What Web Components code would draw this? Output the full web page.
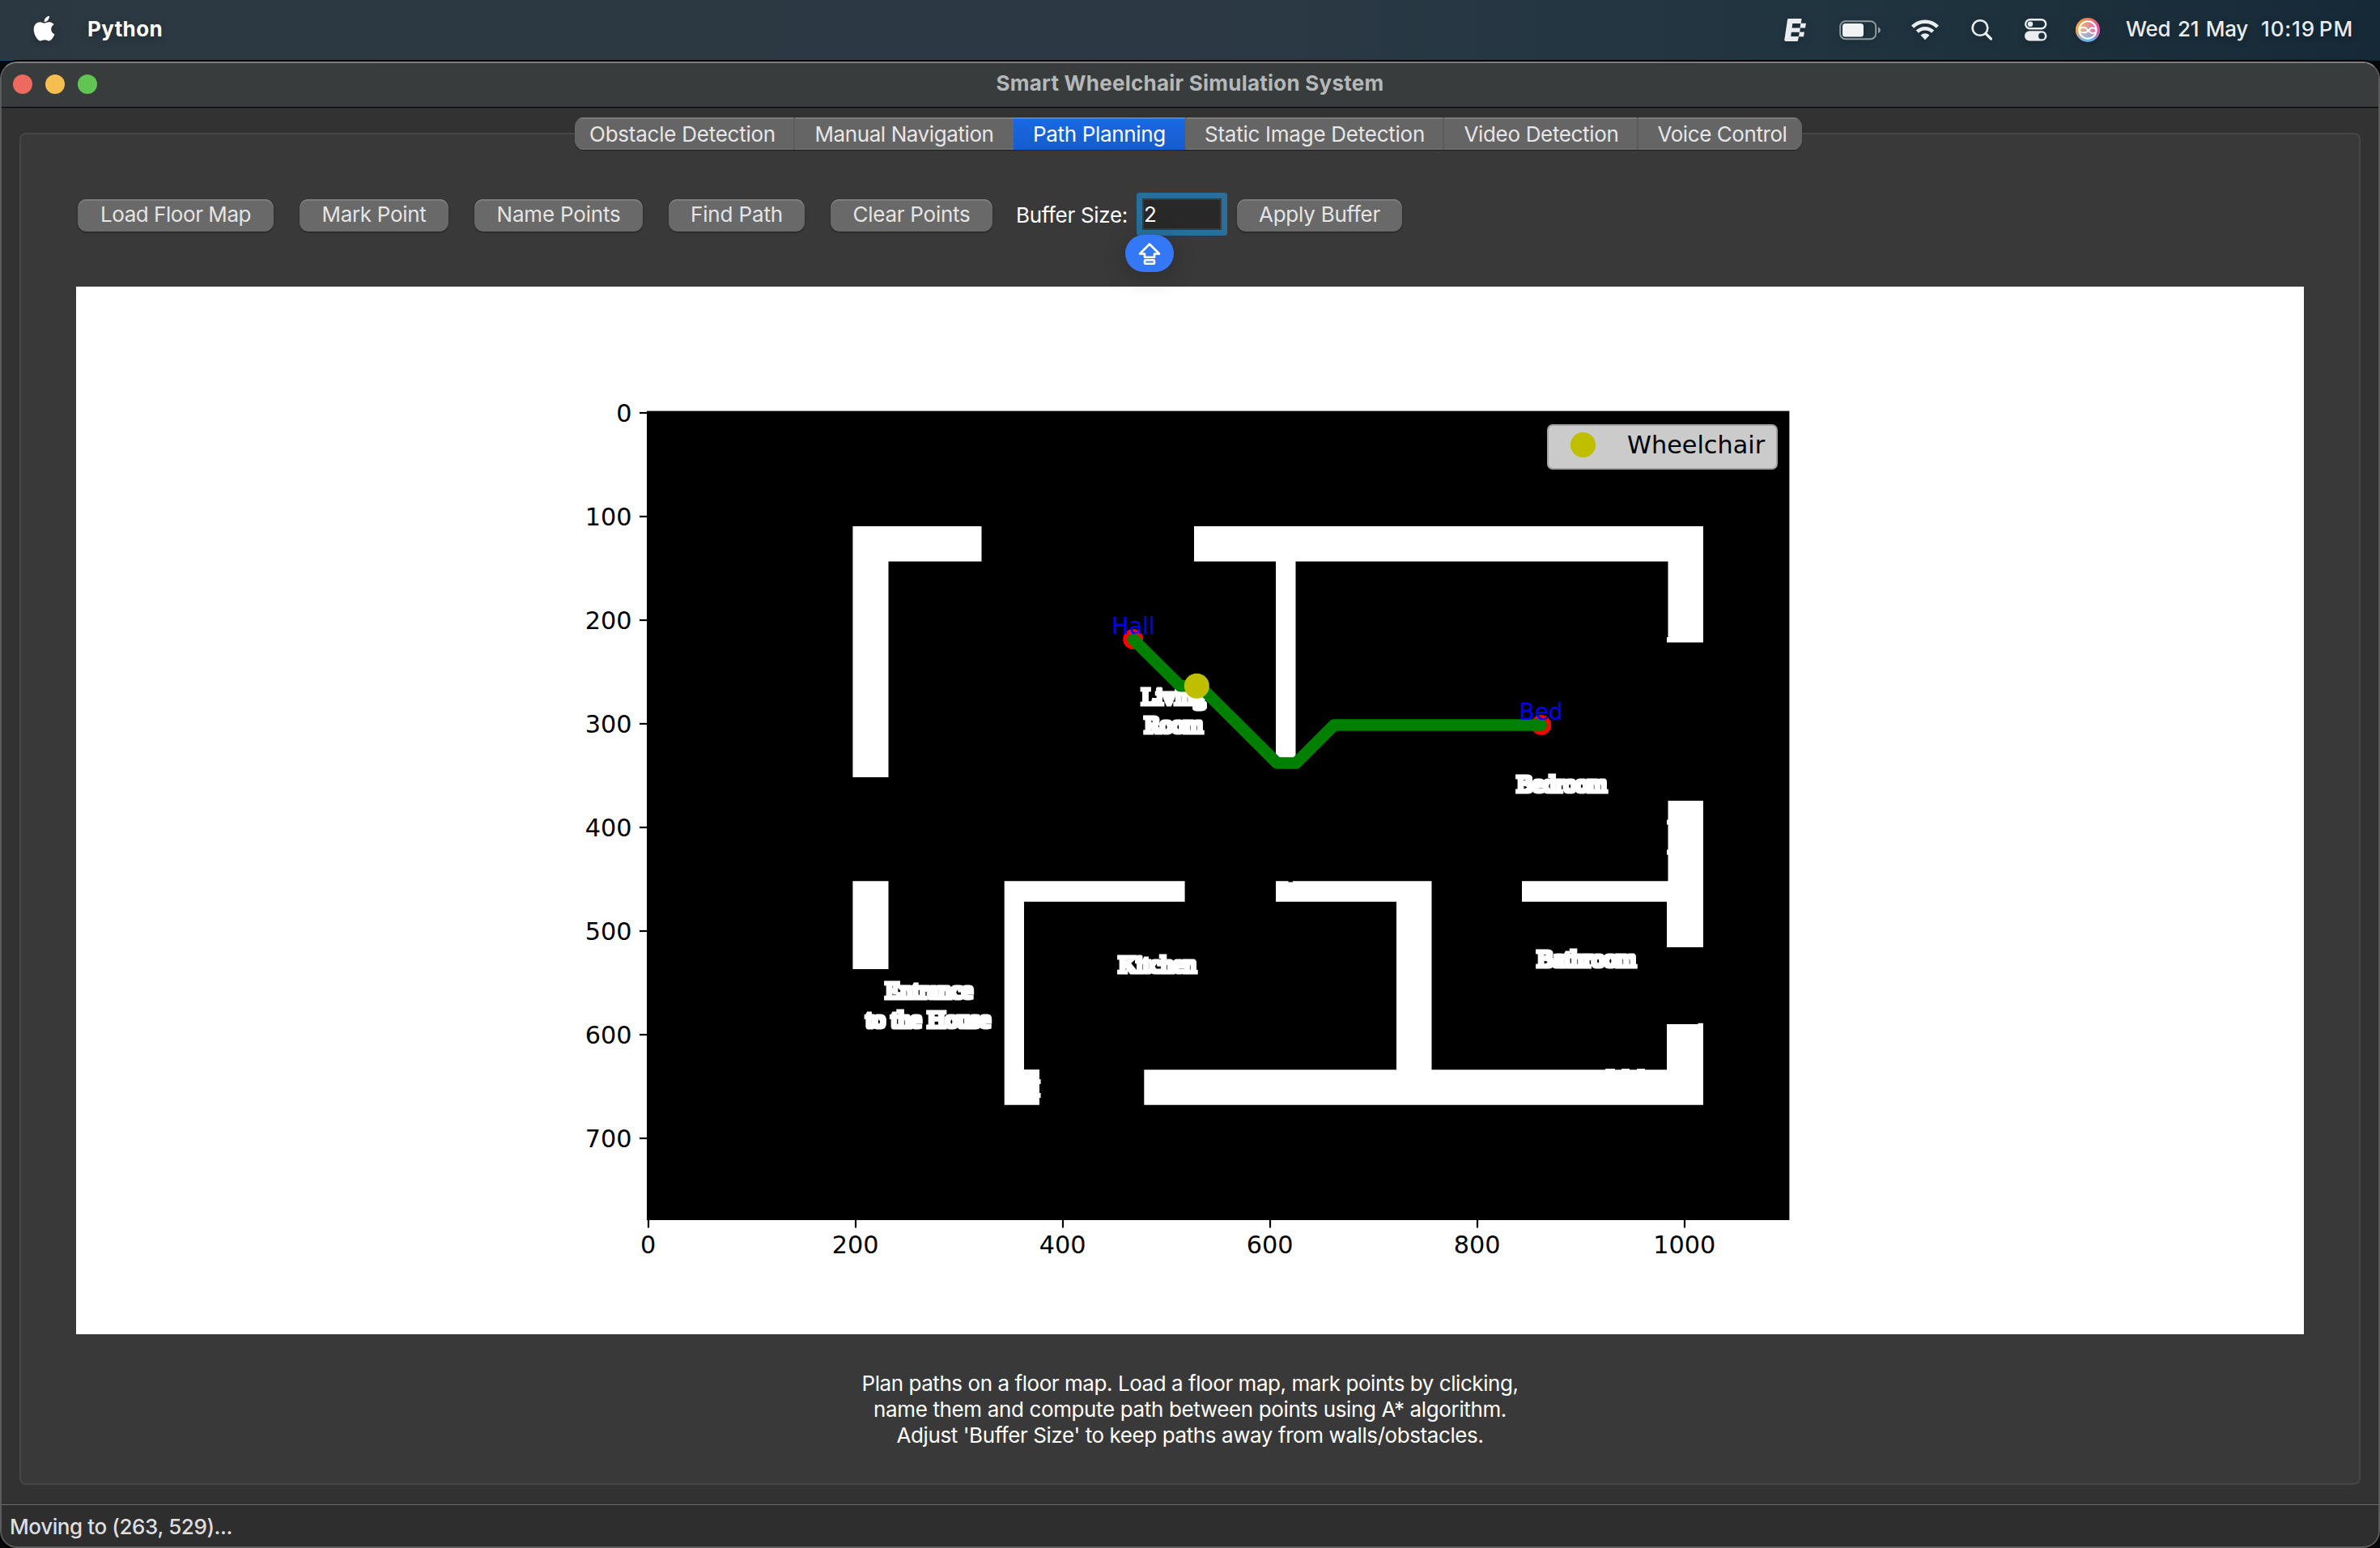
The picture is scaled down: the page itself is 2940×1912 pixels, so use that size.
<!DOCTYPE html>
<html lang="en">
<head>
<meta charset="utf-8">
<title>Smart Wheelchair Simulation System</title>
<style>
html,body{margin:0;padding:0;width:2940px;height:1912px;overflow:hidden;background:#05090c}
body{font-family:Inter,"Liberation Sans",sans-serif;font-size:26px;color:#e4e4e4;display:flex;flex-direction:column}
</style>
</head>
<body>
<menu-bar>
  <menu-glyph slot="left" name="apple"></menu-glyph>
  <fit-text slot="left" w="93" style="font-weight:700;color:#fff;line-height:72px">Python</fit-text>
  <menu-glyph slot="right" name="editor" style="margin-right:40px"></menu-glyph>
  <menu-glyph slot="right" name="battery" style="margin-right:37px"></menu-glyph>
  <menu-glyph slot="right" name="wifi" style="margin-right:40px"></menu-glyph>
  <menu-glyph slot="right" name="search" style="margin-right:40px"></menu-glyph>
  <menu-glyph slot="right" name="control" style="margin-right:35px"></menu-glyph>
  <menu-glyph slot="right" name="siri" style="margin-right:31px"></menu-glyph>
  <fit-text slot="right" w="151" style="margin-right:16px;word-spacing:2px">Wed 21 May</fit-text>
  <fit-text slot="right" w="114" style="word-spacing:-3px">10:19 PM</fit-text>
</menu-bar>
<desktop-strip></desktop-strip>
<app-window>
  <fit-text slot="title" w="479">Smart Wheelchair Simulation System</fit-text>
  <tab-strip slot="tabs">
    <tab-item style="width:270px;padding-right:6px" first><fit-text w="230">Obstacle Detection</fit-text></tab-item>
    <tab-item style="width:272px"><fit-text w="221">Manual Navigation</fit-text></tab-item>
    <tab-item style="width:212px" active><fit-text w="164">Path Planning</fit-text></tab-item>
    <tab-item style="width:318px" nodiv><fit-text w="272">Static Image Detection</fit-text></tab-item>
    <tab-item style="width:240px;padding-left:2px"><fit-text w="191">Video Detection</fit-text></tab-item>
    <tab-item style="width:204px;padding-left:5px"><fit-text w="160">Voice Control</fit-text></tab-item>
  </tab-strip>
  <tool-row>
    <push-button style="width:242px"><fit-text w="186">Load Floor Map</fit-text></push-button>
    <push-button style="width:184px"><fit-text w="129">Mark Point</fit-text></push-button>
    <push-button style="width:208px"><fit-text w="153">Name Points</fit-text></push-button>
    <push-button style="width:168px"><fit-text w="114">Find Path</fit-text></push-button>
    <push-button style="width:200px"><fit-text w="145">Clear Points</fit-text></push-button>
    <number-field label="Buffer Size:" value="2"></number-field>
    <push-button style="width:204px"><fit-text w="150">Apply Buffer</fit-text></push-button>
  </tool-row>
  <floor-plot></floor-plot>
  <help-text>
    <fit-text w="811">Plan paths on a floor map. Load a floor map, mark points by clicking,</fit-text>
    <fit-text w="782">name them and compute path between points using A* algorithm.</fit-text>
    <fit-text w="725">Adjust 'Buffer Size' to keep paths away from walls/obstacles.</fit-text>
  </help-text>
  <fit-text slot="status" w="275">Moving to (263, 529)...</fit-text>
</app-window>
<script>
const define = (name, html, init) => customElements.define(name, class extends HTMLElement {
  constructor() {
    super();
    this.attachShadow({ mode: 'open' }).innerHTML = typeof html === 'function' ? html(this) : html;
  }
  connectedCallback() { if (init) init.call(this); }
});

define('menu-bar', `<style>
:host{display:flex;justify-content:space-between;box-sizing:border-box;height:74px;padding:0 33px 0 41px;line-height:71px;
 background:linear-gradient(90deg,#2c3841 0,#2c3944 50%,#213541 74%,#1c303c 88%,#152936 100%);font-weight:500;color:#e9edef;
 text-shadow:0 3px 8px rgba(0,0,0,.25);flex:none}
div{display:flex;align-items:flex-start}
.l{gap:40px}
</style><div class="l"><slot name="left"></slot></div><div><slot name="right"></slot></div>`);

const glyphs = {
apple: [27, `<path fill="#fff" transform="translate(.4 17.6) scale(.0685)" d="M318.7 268.7c-.2-36.7 16.4-64.4 50-84.8-18.8-26.9-47.2-41.7-84.7-44.6-35.5-2.8-74.3 20.7-88.500 20.7-15 0-49.400-19.700-76.400-19.700C63.300 141.200 4 184.800 4 273.500q0 39.300 14.400 81.200c12.800 36.700 59 126.700 107.200 125.200 25.200-.6 43-17.900 75.800-17.900 31.800 0 48.300 17.900 76.400 17.900 48.600-.7 90.400-82.500 102.600-119.300-65.200-30.700-61.700-90-61.700-91.900zm-56.600-164.200c27.300-32.400 24.800-61.900 24-72.500-24.100 1.400-52 16.400-67.900 34.900-17.500 19.800-27.800 44.300-25.600 71.900 26.100 2 49.900-11.400 69.500-34.300z"/>`],
editor: [28, `<path fill="#e9edef" d="M5 23H21.500L20.800 28.700H27L26 34.500H19.800L19.300 39.500H25L24 45.300H18L17 50Q16.800 51 16 51H2Q0 51 .3 49L4 24.500Q4.200 23 5 23zM10.300 29L9.600 34.500H19.500L20.300 29zM8.900 39.800L8.200 45H18L18.800 39.800z" fill-rule="evenodd"/>`],
battery: [52, `<rect x="1.200" y="26.200" width="44" height="22" rx="6.500" fill="none" stroke="#8e9aa0" stroke-width="2"/><rect x="4" y="29" width="26" height="16.400" rx="3.500" fill="#f0f2f3"/><path d="M48 33.500q3 1 3 3.700t-3 3.700z" fill="#8e9aa0"/>`],
wifi: [34, `<g fill="none" stroke="#e9edef" stroke-width="4.600"><path d="M1.600 33.200a21.700 21.700 0 0 1 30.800 0"/><path d="M7.400 39.200a13.500 13.500 0 0 1 19.200 0"/></g><path fill="#e9edef" d="M11.500 43.500a8 8 0 0 1 11 0L17 49.300z"/>`],
search: [26, `<circle cx="11" cy="34.500" r="9.300" fill="none" stroke="#e9edef" stroke-width="2.600"/><path d="M18 41.500L24.500 48" stroke="#e9edef" stroke-width="3.200" stroke-linecap="round"/>`],
control: [28, `<rect x="1.200" y="24.200" width="25" height="11" rx="5.500" fill="none" stroke="#e9edef" stroke-width="2.400"/><circle cx="7" cy="29.700" r="3.200" fill="#e9edef"/><rect x="0" y="38.300" width="27.400" height="12.200" rx="6.100" fill="#e9edef"/><circle cx="21" cy="44.400" r="3.900" fill="#1c303c"/>`],
siri: [31, `<defs><linearGradient id="a" x1=".3" y1="0" x2=".6" y2="1"><stop offset="0" stop-color="#ee7a3c"/><stop offset=".5" stop-color="#c9a0a8"/><stop offset="1" stop-color="#4fb4f5"/></linearGradient><radialGradient id="b" cx="1" cy=".4" r=".6"><stop offset="0" stop-color="#f5389a"/><stop offset="1" stop-color="#f5389a" stop-opacity="0"/></radialGradient><radialGradient id="c" cx="0" cy=".35" r=".55"><stop offset="0" stop-color="#f5b03c"/><stop offset="1" stop-color="#f5b03c" stop-opacity="0"/></radialGradient></defs><circle cx="15" cy="37" r="15" fill="url(#a)"/><circle cx="15" cy="37" r="15" fill="url(#b)"/><circle cx="15" cy="37" r="15" fill="url(#c)"/><circle cx="15" cy="37" r="10.700" fill="#fff" fill-opacity=".1" stroke="#fff" stroke-width="2"/><path d="M4.500 36.500C8 32.500 12 33 15 37s7 5.500 9.500 2.500M4.500 37.500c1 3 8 4.500 11.500 0 3-4 6.500-4.500 9.500-.5" fill="none" stroke="#fff" stroke-width="1.900"/>`]
};
define('menu-glyph', el => {
  const [w, body] = glyphs[el.getAttribute('name')];
  return `<style>:host{display:block;width:${w}px;height:74px;filter:drop-shadow(0 3px 4px rgba(0,0,0,.25))}svg{display:block}</style><svg width="${w}" height="74" viewBox="0 0 ${w} 74">${body}</svg>`;
});

/* Sliver of desktop visible between the menu bar and the window. */
define('desktop-strip', `<style>
:host{display:block;flex:none;height:1px;border-bottom:1px solid #000;background:linear-gradient(90deg,#1d4a62 0 59px,#050708 59px 62px,#4f6a7a 62px 108px,#000 108px 148px,#123040 148px 200px,#000 200px 396px,#7f8c93 396px 682px,#6a5a40 682px 690px,#16333f 690px 716px,#000 716px 919px,#7f9093 919px 1134px,#000 1134px 1160px,#163a50 1160px 1220px,#000 1220px 1683px,#8a9a9c 1683px 1826px,#000 1826px 1935px,#76888c 1935px 2087px,#000 2087px 2173px,#7f9aa4 2173px 2322px,#000 2322px 2513px,#7aa0b0 2513px 2535px,#041018 2535px 2740px,#05283c 2740px)}
</style>`);

define('app-window', `<style>
:host{display:flex;flex-direction:column;box-sizing:border-box;height:1836px;border:2px solid #5b5b5b;border-top-color:#7b7e7e;border-radius:21px;background:#323232;overflow:hidden;box-shadow:0 0 0 2px #000}
header{display:grid;grid-template-columns:1fr auto 1fr;height:54px;background:#383c3c;border-bottom:1px solid #000;box-shadow:0 1px 0 #2b2b2b;color:#b4b8b8;font-weight:700;line-height:49px;flex:none}
.lights{display:flex;gap:16px;padding:14px 0 0 14px}
.lights i{width:24px;height:24px;border-radius:50%;background:#ed6a5f}
.lights i:nth-child(2){background:#f5bf4f}.lights i:nth-child(3){background:#61c554}
main{display:flex;flex-direction:column;flex:1;padding:12px 22px 24px}
.tabs{display:flex;justify-content:center;height:40px;z-index:1;margin-right:4px}
.pane{flex:1;display:flex;flex-direction:column;margin-top:-21px;background:#393939;border:2px solid #464646;border-radius:8px;box-sizing:border-box}
footer{height:51px;border-top:1px solid #6b6b6b;background:#2e2e2e;line-height:54px;padding-left:10px;color:#dedede;flex:none;font-weight:450}
</style>
<header><div class="lights"><i></i><i></i><i></i></div><slot name="title"></slot></header>
<main><div class="tabs"><slot name="tabs"></slot></div><div class="pane"><slot></slot></div></main>
<footer><slot name="status"></slot></footer>`);

define('tab-strip', `<style>:host{display:flex;width:1516px;height:40px;border-radius:11px;overflow:hidden;background:#656565;box-shadow:0 1px 1px rgba(0,0,0,.45)}</style><slot></slot>`);
define('tab-item', `<style>:host{display:flex;justify-content:center;box-sizing:border-box;height:40px;line-height:41px;color:#e6e6e6;border-left:2px solid #5c5c5c;box-shadow:inset 0 2px 0 #7b7b7b,inset 0 -2px 0 #6c6c6c}
:host([first]),:host([nodiv]){border-left-color:transparent}
:host([active]){border-left:0;color:#fff;background:linear-gradient(#1a69e6,#155ccd);box-shadow:inset 0 2px 0 #3f86ef}</style><slot></slot>`);

define('tool-row', `<style>:host{display:flex;gap:32px;height:40px;margin:80px 0 0 70px;flex:none}</style><slot></slot>`);
define('push-button', `<style>:host{display:flex;justify-content:center;height:40px;line-height:37px;border-radius:11px;background:#696969;box-shadow:inset 0 2px 0 #7e7e7e,0 1px 2px rgba(0,0,0,.5);color:#e4e4e4}</style><slot></slot>`);
define('number-field', el => `<style>
:host{display:flex;width:272px;margin-right:-34px;color:#fff;line-height:40px}
.label{margin-left:-3px;width:156px}
.field{position:relative;box-sizing:border-box;width:98px;height:39px;margin-top:-1px;background:#282828;box-shadow:inset 0 0 0 2px #3b3b3b,0 0 0 7px #286f9c;border-radius:1px;padding-left:2px}
.badge{position:absolute;left:-21px;top:45px;width:60px;height:46px;border-radius:23px;background:#3478f7;box-shadow:0 6px 28px rgba(0,0,0,.22);z-index:2}
svg{display:block}
</style>
<div class="label"><fit-text w="138">${el.getAttribute('label')}</fit-text></div>
<div class="field"><fit-text>${el.getAttribute('value')}</fit-text>
<div class="badge"><svg width="60" height="46" viewBox="0 0 60 46" fill="none" stroke="#fff" stroke-width="2.600" stroke-linejoin="round"><path d="M30 11.500L42 23.500H36V27.700H24V23.500H18z"/><rect x="24" y="31.300" width="12" height="4.500" rx="1"/></svg></div></div>`);

define('floor-plot', () => {
  const yt = [0,100,200,300,400,500,600,700], xt = [0,200,400,600,800,1000];
  const ticks = yt.map(v => `<path d="M790 ${510 + v * 1.28}H799"/>`).join('') + xt.map(v => `<path d="M${801 + v * 1.28} 1507V1516.500"/>`).join('');
  const labels = yt.map(v => `<text x="780.500" y="${521.3 + v * 1.28}" text-anchor="end">${v}</text>`).join('') + xt.map(v => `<text x="${800.7 + v * 1.28}" y="1548" text-anchor="middle">${v}</text>`).join('');
  const room = (x, y, len, t) => `<text x="${x}" y="${y}" textLength="${len}" lengthAdjust="spacingAndGlyphs">${t}</text>`;
  return `<style>
:host{display:block;width:2752px;height:1294px;margin:68px 0 0 68px;background:#fff;flex:none}
svg{display:block}
.ax{font:30.300px "DejaVu Sans",sans-serif;fill:#000}
.room{font:29px "Liberation Serif",serif;fill:#fff;stroke:#fff;stroke-width:.9}
.pt{font:27.800px "DejaVu Sans",sans-serif;fill:#00f;text-anchor:middle}
</style>
<svg width="2752" height="1294" viewBox="94 354 2752 1294">
<defs><filter id="dilate" x="-5%" y="-5%" width="110%" height="110%"><feMorphology operator="dilate" radius="2"/></filter></defs>
<rect x="799" y="507.600" width="1411.400" height="999.400"/>
<g stroke="#000" stroke-width="2.200">${ticks}</g>
<g class="ax">${labels}</g>
<g fill="#fff">
<path d="M1053.400 650H1212.500V693.600H1097.500V960H1053.400z"/>
<path d="M1475 650H2104V793.600H2059V787H2060.500V693.600H1600.500V942H1576V693.600H1475z"/>
<path d="M2060.500 989H2104V1170H2059V1113.700H1880V1088.200H2060.500V1055.700H2059V1049.500H2060.500V1018.500H2059V1012.600H2060.500z"/>
<path d="M1053.400 1088.200H1097.500V1197H1053.400z"/>
<path d="M1240.700 1088.200H1463.600V1113.700H1265V1321H1284V1333H1285.600V1339H1284V1350H1285.600V1356H1284V1364.700H1240.700z"/>
<path d="M1576 1088.200H1591.500V1089.500H1597V1088.200H1768.500V1321.200H1983V1320H1995V1321.200H2003V1320H2013V1321.200H2022V1320H2032V1321.200H2059V1265H2097.500V1263.800H2104V1364.700H1413.300V1321.200H1725V1113.700H1576z"/>
</g>
<g class="room" filter="url(#dilate)">
${room(1410.2, 870, 79, 'Living')}
${room(1413.7, 904.5, 72, 'Room')}
${room(1873.7, 978, 111, 'Bedroom')}
${room(1381.7, 1201, 96, 'Kitchen')}
${room(1093.7, 1233, 108, 'Entrance')}
${room(1069.7, 1268.5, 154, 'to the House')}
${room(1898.7, 1193.5, 122, 'Bathroom')}
</g>
<circle cx="1399.700" cy="789.500" r="12.500" fill="#f00"/><circle cx="1903.700" cy="895.500" r="12.500" fill="#f00"/>
<path d="M1399.700 789.500L1458 847.300H1482L1577.500 942.500H1601L1648 895.500H1903.700" fill="none" stroke="#008000" stroke-width="14.500" stroke-linejoin="round" stroke-linecap="round"/>
<text class="pt" x="1400" y="782.700">Hall</text><text class="pt" x="1903.500" y="888.700">Bed</text>
<circle cx="1478.300" cy="847.300" r="15.500" fill="#bfbf00"/>
<rect x="1912" y="525" width="283" height="54" rx="6" fill="#cbcbcb" stroke="#a3a3a3" stroke-width="2"/>
<circle cx="1955.500" cy="549.500" r="15.500" fill="#bfbf00"/>
<text class="ax" x="2010" y="560">Wheelchair</text>
</svg>`;
});

define('help-text', `<style>:host{display:flex;flex-direction:column;align-items:center;margin-top:45px;line-height:32px;color:#fff}</style><slot></slot>`);

/* Single line of text tracked to a given advance width.
   Registered last: it measures itself with the weight inherited from its container's shadow styles. */
define('fit-text', `<style>:host{display:block;white-space:pre;flex:none}span{display:inline-block}</style><span><slot></slot></span>`,
function () {
  const want = parseFloat(this.getAttribute('w'));
  const span = this.shadowRoot.querySelector('span');
  const have = span.getBoundingClientRect().width;
  if (want && have) span.style.letterSpacing = ((want - have) / this.textContent.length) + 'px';
});
</script>
</body>
</html>
